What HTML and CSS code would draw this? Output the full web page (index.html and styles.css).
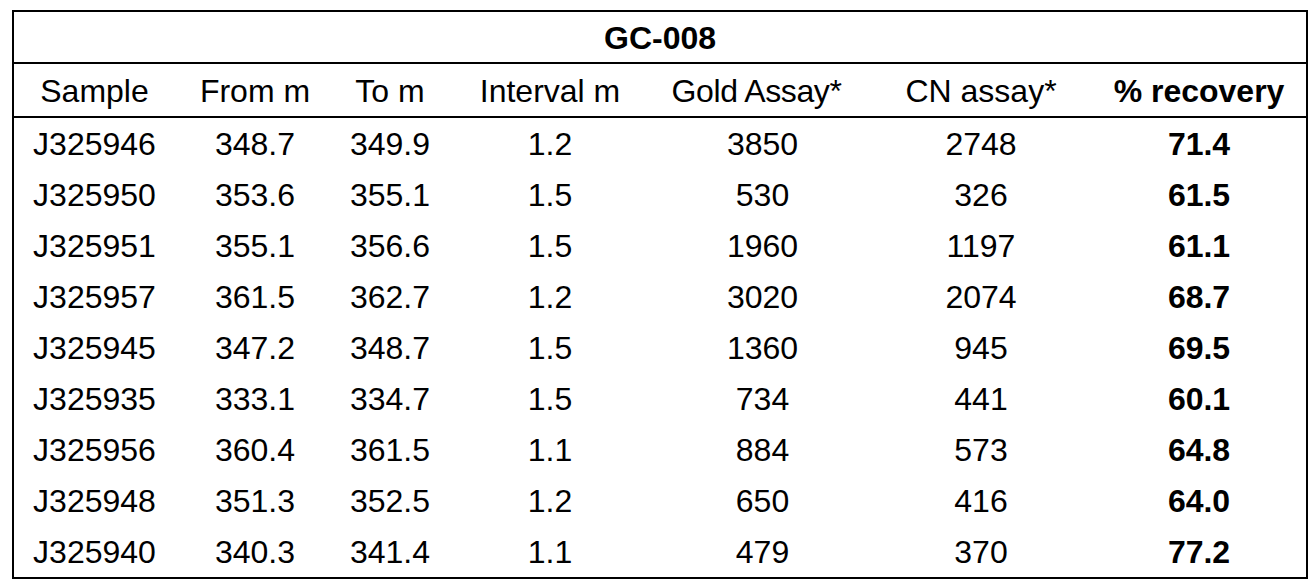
FILE: index.html
```html
<!DOCTYPE html>
<html>
<head>
<meta charset="utf-8">
<link rel="stylesheet" href="styles.css">
</head>
<body>
<div class="page">
<table class="assay">
  <colgroup>
    <col class="c1"><col class="c2"><col class="c3"><col class="c4"><col class="c5"><col class="c6"><col class="c7">
  </colgroup>
  <thead>
    <tr class="title-row"><th colspan="7">GC-008</th></tr>
    <tr class="head-row">
      <th>Sample</th><th>From m</th><th>To m</th><th>Interval m</th><th class="gold">Gold Assay*</th><th>CN assay*</th><th class="bold">% recovery</th>
    </tr>
  </thead>
  <tbody>
    <tr><td>J325946</td><td>348.7</td><td>349.9</td><td>1.2</td><td>3850</td><td>2748</td><td class="bold">71.4</td></tr>
    <tr><td>J325950</td><td>353.6</td><td>355.1</td><td>1.5</td><td>530</td><td>326</td><td class="bold">61.5</td></tr>
    <tr><td>J325951</td><td>355.1</td><td>356.6</td><td>1.5</td><td>1960</td><td>1197</td><td class="bold">61.1</td></tr>
    <tr><td>J325957</td><td>361.5</td><td>362.7</td><td>1.2</td><td>3020</td><td>2074</td><td class="bold">68.7</td></tr>
    <tr><td>J325945</td><td>347.2</td><td>348.7</td><td>1.5</td><td>1360</td><td>945</td><td class="bold">69.5</td></tr>
    <tr><td>J325935</td><td>333.1</td><td>334.7</td><td>1.5</td><td>734</td><td>441</td><td class="bold">60.1</td></tr>
    <tr><td>J325956</td><td>360.4</td><td>361.5</td><td>1.1</td><td>884</td><td>573</td><td class="bold">64.8</td></tr>
    <tr><td>J325948</td><td>351.3</td><td>352.5</td><td>1.2</td><td>650</td><td>416</td><td class="bold">64.0</td></tr>
    <tr><td>J325940</td><td>340.3</td><td>341.4</td><td>1.1</td><td>479</td><td>370</td><td class="bold">77.2</td></tr>
  </tbody>
</table>
</div>
</body>
</html>
```
FILE: styles.css
```css
html, body {
  margin: 0;
  padding: 0;
  background: #ffffff;
}
.page {
  padding: 10px 0 0 12px;
}
.assay {
  box-sizing: border-box;
  width: 1296px;
  table-layout: fixed;
  border-collapse: separate;
  border-spacing: 0;
  border: 2px solid #000;
  font-family: "Liberation Sans", Arial, sans-serif;
  font-size: 32px;
  color: #000;
}
.c1 { width: 161px; }
.c2 { width: 160px; }
.c3 { width: 110px; }
.c4 { width: 210px; }
.c5 { width: 215px; }
.c6 { width: 222px; }
.c7 { width: 214px; }
.assay th, .assay td {
  padding: 0;
  text-align: center;
  vertical-align: middle;
  white-space: nowrap;
  font-weight: normal;
}
.title-row th {
  font-weight: bold;
  font-size: 32px;
  line-height: 48px;
  padding-top: 2px;
  border-bottom: 2px solid #000;
}
.head-row th {
  line-height: 49px;
  padding-top: 3px;
  border-bottom: 2px solid #000;
}
.head-row .gold {
  letter-spacing: -0.4px;
  padding-right: 12px;
}
.assay td {
  line-height: 49px;
  padding-top: 2px;
}
.assay .bold {
  font-weight: bold;
}
```
